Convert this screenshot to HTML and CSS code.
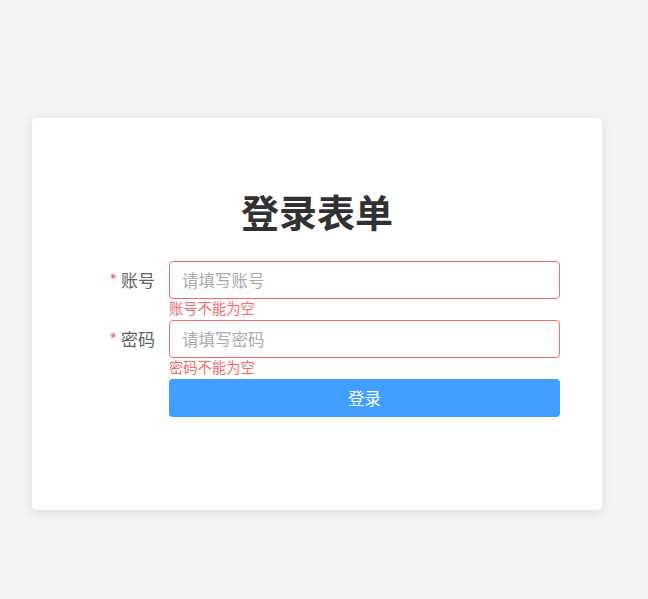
FILE: index.html
```html
<!DOCTYPE html>
<html lang="zh-CN">
<head>
<meta charset="utf-8">
<title>登录表单</title>
<link rel="stylesheet" href="styles.css">
</head>
<body>
<div class="page">
  <div class="card">
    <h2 class="title">登录表单</h2>
    <form class="form">
      <div class="form-item">
        <label class="label"><span class="star">*</span> 账号</label>
        <div class="control">
          <input class="input" type="text" placeholder="请填写账号">
          <div class="error">账号不能为空</div>
        </div>
      </div>
      <div class="form-item">
        <label class="label"><span class="star">*</span> 密码</label>
        <div class="control">
          <input class="input" type="password" placeholder="请填写密码">
          <div class="error">密码不能为空</div>
        </div>
      </div>
      <div class="form-item">
        <div class="label"></div>
        <div class="control">
          <button class="btn" type="button">登录</button>
        </div>
      </div>
    </form>
  </div>
</div>
</body>
</html>
```
FILE: styles.css
```css
* { box-sizing: border-box; }
html, body {
  margin: 0;
  padding: 0;
  background: #f4f4f4;
  font-family: "Noto Sans CJK SC", "Noto Sans", sans-serif;
}
.page {
  padding: 118px 0 0 32px;
  min-height: 599px;
}
.card {
  width: 570px;
  height: 392px;
  background: #fff;
  border-radius: 4px;
  box-shadow: 0 2px 12px 0 rgba(0, 0, 0, 0.1);
  padding-top: 70px;
}
.title {
  margin: 0 0 27px;
  text-align: center;
  font-size: 38px;
  line-height: 46px;
  font-weight: 700;
  color: #303133;
}
.form {
  margin-left: 37px;
  width: 491px;
}
.form-item {
  display: flex;
  align-items: center;
  margin-bottom: 21px;
}
.label {
  width: 100px;
  flex: none;
  text-align: right;
  padding-right: 14px;
  font-size: 17px;
  line-height: 38px;
  color: #606266;
}
.star {
  color: #f56c6c;
}
.control {
  position: relative;
  flex: 1;
}
.input {
  display: block;
  width: 100%;
  height: 38px;
  border: 1px solid #f56c6c;
  border-radius: 4px;
  padding: 0 12px;
  font-family: inherit;
  font-size: 16.5px;
  color: #606266;
  outline: none;
}
.input::placeholder {
  color: #a8abb2;
}
.error {
  position: absolute;
  left: 0;
  top: 100%;
  font-size: 14.3px;
  line-height: 17px;
  color: #f56c6c;
}
.btn {
  display: block;
  width: 100%;
  height: 38px;
  border: none;
  border-radius: 4px;
  background: #409eff;
  color: #fff;
  font-family: inherit;
  font-size: 16.5px;
}
```
